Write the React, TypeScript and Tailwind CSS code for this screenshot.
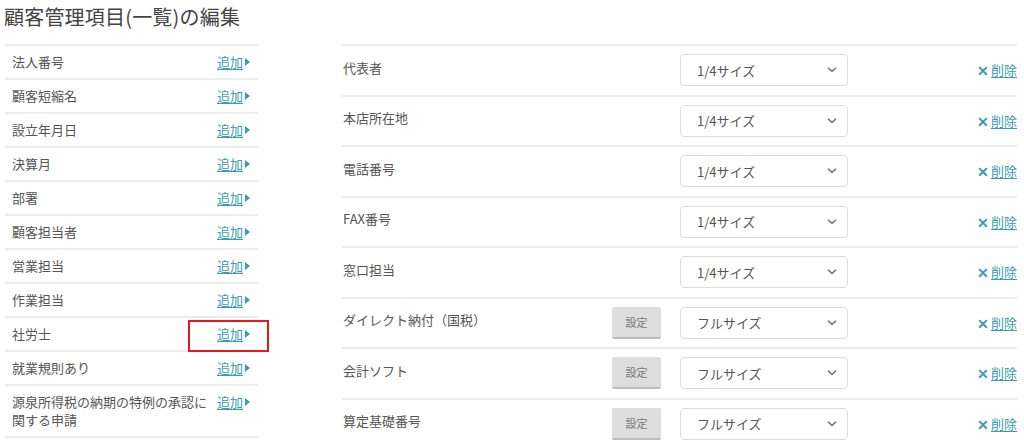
import React from "react";

const leftItems: string[] = [
  "法人番号",
  "顧客短縮名",
  "設立年月日",
  "決算月",
  "部署",
  "顧客担当者",
  "営業担当",
  "作業担当",
  "社労士",
  "就業規則あり",
  "源泉所得税の納期の特例の承認に関する申請",
];

const rightItems: { label: string; size: string; setting: boolean }[] = [
  { label: "代表者", size: "1/4サイズ", setting: false },
  { label: "本店所在地", size: "1/4サイズ", setting: false },
  { label: "電話番号", size: "1/4サイズ", setting: false },
  { label: "FAX番号", size: "1/4サイズ", setting: false },
  { label: "窓口担当", size: "1/4サイズ", setting: false },
  { label: "ダイレクト納付（国税）", size: "フルサイズ", setting: true },
  { label: "会計ソフト", size: "フルサイズ", setting: true },
  { label: "算定基礎番号", size: "フルサイズ", setting: true },
];

function Chevron() {
  return (
    <svg width="10" height="6" viewBox="0 0 10 6" className="text-[#777]">
      <path d="M1.5 1.2 L5 4.5 L8.5 1.2" fill="none" stroke="currentColor" strokeWidth="1.6" strokeLinecap="round" strokeLinejoin="round" />
    </svg>
  );
}

function Triangle() {
  return (
    <svg width="5" height="8" viewBox="0 0 5 8" className="ml-[2px] text-[#3a9cad]">
      <path d="M0 0 L5 4 L0 8 Z" fill="currentColor" />
    </svg>
  );
}

export default function App() {
  return (
    <div
      className="relative w-[1024px] h-[444px] overflow-hidden bg-white text-[#555]"
      style={{ fontFamily: '"Noto Sans CJK JP", "Noto Sans", sans-serif' }}
    >
      <h1 className="pl-[4px] pt-[4px] h-[44px] text-[20px] leading-[26px] text-[#444] tracking-[0.2px]">
        顧客管理項目(一覧)の編集
      </h1>
      <div className="flex pl-[5px]">
        <div className="w-[253px] border-t-2 border-[#ececec]">
          {leftItems.map((item, i) => (
            <div
              key={i}
              className="flex items-start justify-between border-b-2 border-[#ececec] pl-[7px] pr-[8px] py-[7px] min-h-[34px]"
            >
              <span className="text-[13px] leading-[18px] w-[196px]">{item}</span>
              <span className="flex items-center h-[18px]">
                <span className="text-[13px] leading-[18px] text-[#3a9cad] underline underline-offset-2">
                  追加
                </span>
                <Triangle />
              </span>
            </div>
          ))}
        </div>
        <div className="ml-[84px] w-[675px] border-t-2 border-[#ececec]">
          {rightItems.map((item, i) => (
            <div
              key={i}
              className="flex items-center h-[50.5px] border-b-2 border-[#ececec] pl-[1px]"
            >
              <span className="w-[269px] text-[13px] leading-[18px] -mt-[5px]">{item.label}</span>
              <div className="w-[68px]">
                {item.setting && (
                  <button className="w-[49px] h-[32px] rounded-[2px] bg-[#dedede] border-b-2 border-[#bdbdbd] text-[11px] text-[#777]">
                    設定
                  </button>
                )}
              </div>
              <div className="w-[168px] h-[32px] rounded-[4px] border border-[#dcdcdc] bg-white flex items-center justify-between pl-[16px] pr-[10px]">
                <span className="text-[13px] text-[#555]">{item.size}</span>
                <Chevron />
              </div>
              <div className="flex-1 flex justify-end items-center">
                <span className="text-[#3a9cad] text-[14px] font-bold leading-[18px] mr-[2px]">✕</span>
                <span className="text-[13px] leading-[18px] text-[#3a9cad] underline underline-offset-2">削除</span>
              </div>
            </div>
          ))}
        </div>
      </div>
      <div className="absolute left-[188px] top-[320px] w-[81px] h-[32px] border-2 border-[#e8161f]" />
    </div>
  );
}
